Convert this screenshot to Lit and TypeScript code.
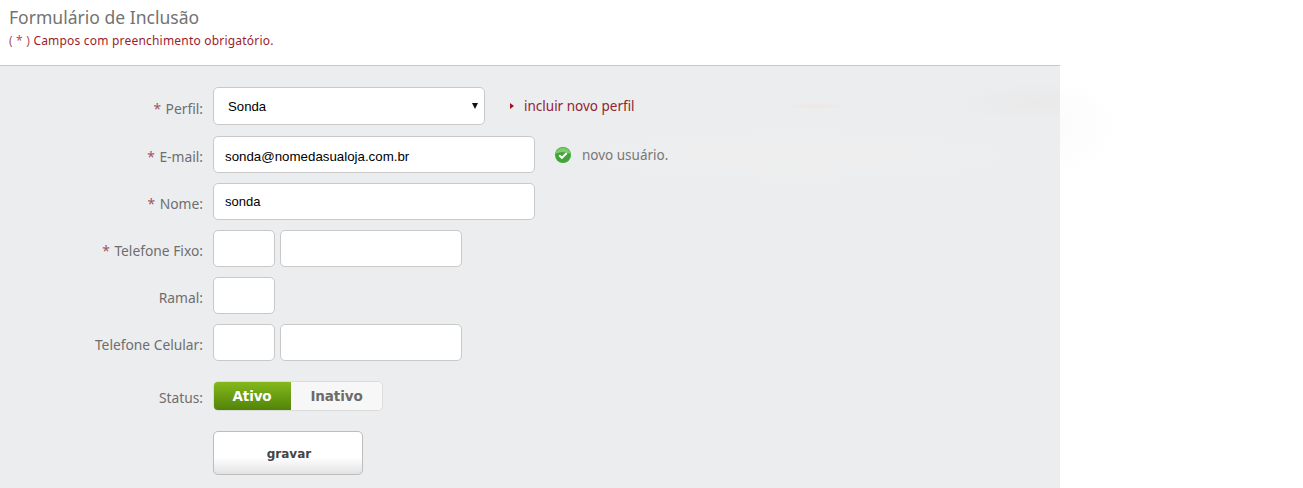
import { LitElement, html, css } from "lit";
import { customElement } from "lit/decorators.js";

@customElement("app-root")
export class AppRoot extends LitElement {
  static styles = css`
    :host { display: block; position: relative; width: 1303px; height: 488px; overflow: hidden; background: #fff; font-family: "DejaVu Sans", sans-serif; }
    .head { height: 66px; box-sizing: border-box; padding: 6px 0 0 9px; width: 1060px; border-bottom: 1px solid #c8c8c8; }
    h1 { margin: 0; font: 400 17.55px/22px "Noto Sans", sans-serif; color: #737373; }
    .req { margin: 3px 0 0; font: 400 12px/19px "Noto Sans", sans-serif; letter-spacing: .2px; color: #9b1c2e; }
    .req span { color: #a8505c; }
    .panel { width: 1060px; height: 422px; box-sizing: border-box; padding-top: 21px;
      background:
        radial-gradient(ellipse 32px 3px at 815px 40px, #eee6e1, transparent),
        radial-gradient(ellipse 90px 20px at 1040px 36px, #e9e9e9, transparent),
        radial-gradient(ellipse 220px 26px at 800px 90px, #eeeeee, transparent),
        #ecedef; }
    .fringe { position: absolute; left: 1060px; top: 76px; width: 60px; height: 100px; background: radial-gradient(ellipse 60px 50px at 0 50%, #fbfbfb, #fff); }
    .form { display: grid; grid-template-columns: 203px 1fr; column-gap: 10px; row-gap: 10px; align-items: center; font: 400 13.8px/18px "Noto Sans", sans-serif; color: #6e6e6e; }
    .lab { text-align: right; padding-top: 4px; }
    .lab i { font-style: normal; color: #a05560; margin-right: 1px; }
    .ctl { display: flex; align-items: center; height: 37px; }
    .ctl.sel { height: 38px; margin-bottom: 1px; }
    .box { box-sizing: border-box; height: 37px; background: #fff; border: 1px solid #c9c9c9; border-radius: 5px; font: 400 13.3px/37px "Liberation Sans", sans-serif; color: #000; padding-left: 11px; }
    .email { line-height: 39px; }
    .name { font-size: 13px; line-height: 35px; }
    .select { width: 272px; height: 38px; line-height: 38px; font-size: 13.2px; padding-left: 14px; position: relative; }
    .caret { position: absolute; right: 6px; top: 15px; width: 0; height: 0; border-left: 3.5px solid transparent; border-right: 3.5px solid transparent; border-top: 6px solid #111; }
    .wide { width: 322px; }
    .ddd { width: 62px; }
    .num { width: 182px; margin-left: 5px; }
    .link { display: flex; align-items: center; margin-left: 25px; color: #8f2433; font-size: 13.5px; }
    .tri { width: 0; height: 0; margin-right: 10px; border-top: 3.5px solid transparent; border-bottom: 3.5px solid transparent; border-left: 4.5px solid #a60f1f; }
    .ok { display: flex; align-items: center; margin-left: 19px; gap: 10px; color: #777; font-size: 13.5px; }
    .status { margin-top: 10px; }
    .toggle { display: flex; width: 170px; height: 30px; box-sizing: border-box; border-radius: 5px; overflow: hidden; border: 1px solid #dcdcdc; font: 700 13.5px/28px "DejaVu Sans", sans-serif; letter-spacing: -.1px; }
    .on { width: 78px; margin: -1px 0 -1px -1px; line-height: 30px; text-align: center; color: #fff; background: linear-gradient(#86ba1c, #4f8207); }
    .off { flex: 1; text-align: center; color: #6b6b6b; background: #f7f7f7; }
    .btn { box-sizing: border-box; width: 150px; height: 44px; margin-top: 10px; padding-left: 2px; border: 1px solid #bdbdbd; border-radius: 5px; background: linear-gradient(#fff 60%, #e2e2e2); text-align: center; font: 700 12px/44px "DejaVu Sans", sans-serif; color: #444; }
    .st { height: 30px; margin-top: 10px; }
  `;

  render() {
    return html`
      <div class="head">
        <h1>Formulário de Inclusão</h1>
        <p class="req"><span>( * )</span> Campos com preenchimento obrigatório.</p>
      </div>
      <div class="panel">
        <div class="form">
          <div class="lab"><i>*</i> Perfil:</div>
          <div class="ctl sel">
            <div class="box select">Sonda<span class="caret"></span></div>
            <div class="link"><span class="tri"></span>incluir novo perfil</div>
          </div>
          <div class="lab"><i>*</i> E-mail:</div>
          <div class="ctl">
            <div class="box wide email">sonda@nomedasualoja.com.br</div>
            <div class="ok">
              <svg width="18" height="18" viewBox="0 0 18 18"><circle cx="9" cy="9" r="8" fill="#3fa535"/><path d="M1.5 8a7.6 7.6 0 0 1 15 0c-4-2.5-11-2.5-15 0z" fill="#7ccb6c"/><path d="M5.2 9.2l2.7 2.6 4.9-4.8" fill="none" stroke="#fff" stroke-width="2"/></svg>
              novo usuário.
            </div>
          </div>
          <div class="lab"><i>*</i> Nome:</div>
          <div class="ctl"><div class="box wide name">sonda</div></div>
          <div class="lab"><i>*</i> Telefone Fixo:</div>
          <div class="ctl"><div class="box ddd"></div><div class="box num"></div></div>
          <div class="lab">Ramal:</div>
          <div class="ctl"><div class="box ddd"></div></div>
          <div class="lab">Telefone Celular:</div>
          <div class="ctl"><div class="box ddd"></div><div class="box num"></div></div>
          <div class="lab status">Status:</div>
          <div class="st"><div class="toggle"><div class="on">Ativo</div><div class="off">Inativo</div></div></div>
          <div></div>
          <div class="btn">gravar</div>
        </div>
      </div>
      <div class="fringe"></div>
    `;
  }
}
